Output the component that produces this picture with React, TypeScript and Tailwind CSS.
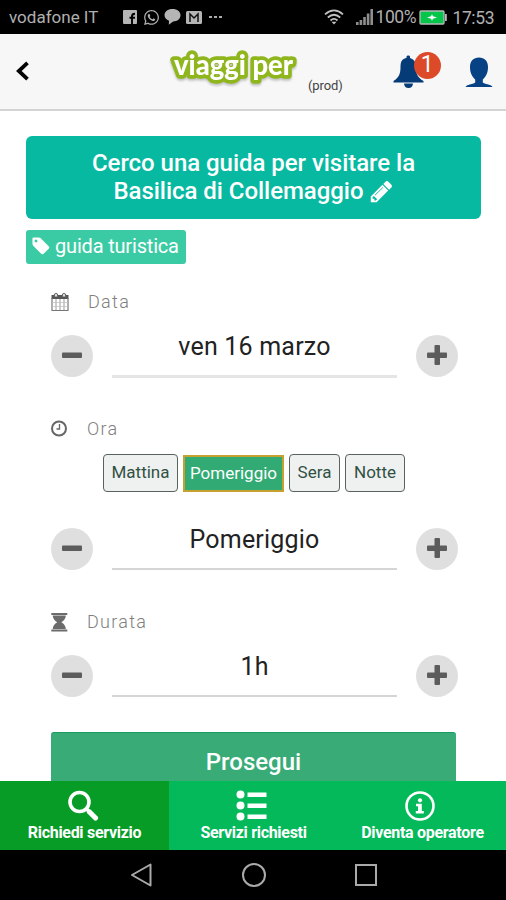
import React from "react";
import { FaWhatsapp } from "react-icons/fa";

const Facebook = () => (
  <svg className="block h-[14px] w-[14px]" viewBox="0 0 14 14">
    <rect width="14" height="14" rx="1" fill="#b5b5b5" />
    <path d="M9 14V6.300Q9 3.800 12 3.800M6.500 7.800H12" stroke="#000" strokeWidth="1.900" fill="none" />
  </svg>
);

const Bubble = () => (
  <svg className="block h-[16px] w-[17px]" viewBox="0 0 17 16">
    <path d="M8.500 0C13.300 0 16.500 2.600 16.500 6.200s-3.200 6.200-7.400 6.200L4.800 15.700l.2-4C2.300 10.600.5 8.800.5 6.200.5 2.600 3.700 0 8.500 0z" fill="#b5b5b5" />
  </svg>
);

const Mail = () => (
  <svg className="block h-[13px] w-[16px]" viewBox="0 0 16 13">
    <rect width="16" height="13" rx="1.500" fill="#b5b5b5" />
    <path d="M4 11V3l4 4 4-4v8" fill="none" stroke="#111" strokeWidth="1.500" />
  </svg>
);

const Wifi = () => (
  <svg className="block h-[16px] w-[20px]" viewBox="0 0 20 16" fill="none" stroke="#c2c2c2" strokeWidth="1.700">
    <path d="M1 5.300Q10-2.500 19 5.300M3.800 8.500Q10 3 16.200 8.500M6.500 11.500Q10 8.300 13.500 11.500" />
    <path d="M7.500 12.700h5L10 15.500z" fill="#c2c2c2" stroke="none" />
  </svg>
);

const Signal = () => (
  <svg className="block h-[16px] w-[18px]" viewBox="0 0 18 16" fill="#8e8e8e">
    <path d="M0 13h2.600v3H0zM3.600 11h2.600v5H3.600zM7.200 8h2.600v8H7.200zM10.800 4.500h2.600V16h-2.600zM14.400 0H17v16h-2.600z" />
  </svg>
);

const Battery = () => (
  <svg className="block h-[15px] w-[28px] shrink-0" viewBox="0 0 28 15">
    <rect x="1" y="1" width="24" height="13" rx="1" fill="#05c64b" stroke="#b9b9b9" strokeWidth="1.300" />
    <path d="M26 4h1.800v7H26z" fill="#b9b9b9" />
    <path d="M8 7.500l4-1.200 1-2 1 2 4 1.200-4 1.200-1 2-1-2z" fill="#fff" />
  </svg>
);

const Bell = () => (
  <svg className="block h-[34px] w-[31px]" viewBox="0 0 31 34" fill="#053b77">
    <path d="M13.500 3V1.800Q13.500.5 15.300.5T17 1.800V3Q23 4.800 23 11.500C23 19 24.500 22.500 30.500 26v1.500H.5V26C6 22.500 7.500 19 7.500 11.500 7.500 6 9.500 3.800 13.500 3z" />
    <path d="M11 28.500h9Q19.500 33 15.500 33T11 28.500z" />
  </svg>
);

const Person = () => (
  <svg className="block h-[31px] w-[28px]" viewBox="0 0 28 31">
    <path d="M14 .5C19.500.5 23 4 23 10c0 6-2.300 10-5.200 12.500v3q1 1.300 5.500 1.900 3.500.6 4.300 2.600H.4q.8-2 4.300-2.600 4.500-.6 5.500-1.900v-3C7.300 20 5 16 5 10 5 4 8.500.5 14 .5z" fill="#064284" />
  </svg>
);

const Pencil = () => (
  <svg className="ml-[5px] inline-block h-[25px] w-[25px] align-[-5px]" viewBox="0 0 1792 1792" fill="currentColor">
    <path d="M491 1536l91-91-235-235-91 91v107h128v128h107zm523-928q0-22-22-22-10 0-17 7l-542 542q-7 7-7 17 0 22 22 22 10 0 17-7l542-542q7-7 7-17zm-54-192l416 416-832 832h-416v-416zm683 96q0 53-37 90l-166 166-416-416 166-165q36-38 90-38 53 0 91 38l235 234q37 39 37 91z" />
  </svg>
);

const Tag = () => (
  <svg className="mt-[-2px] block h-[20px] w-[20px] shrink-0" viewBox="0 0 1792 1792" fill="currentColor">
    <path d="M576 448q0-53-37.500-90.500t-90.500-37.500-90.500 37.500-37.500 90.500 37.500 90.500 90.500 37.500 90.500-37.500 37.500-90.500zm1067 576q0 53-37 90l-491 492q-39 37-91 37-53 0-90-37l-715-716q-38-37-64.500-101t-26.500-117v-416q0-52 38-90t90-38h416q53 0 117 26.500t102 64.500l715 714q37 39 37 91z" />
  </svg>
);

const Calendar = () => (
  <svg className="block h-[20px] w-[18px]" viewBox="0 0 18 20">
    <path d="M.5 3h17v4H.5z" fill="#555" />
    <path d="M1 6v12.500h16V6" fill="none" stroke="#777" strokeWidth="1.200" />
    <path d="M5 7v11M9 7v11M13 7v11" stroke="#999" strokeWidth="1" />
    <path d="M1 10.500h16M1 14.500h16" stroke="#c4c4c4" strokeWidth=".8" />
    <path d="M3.500 4.500V2.500Q5 0 6.500 2.500v2M11.500 4.500V2.500Q13 0 14.500 2.500v2" fill="#eee" stroke="#666" strokeWidth="1.200" />
  </svg>
);

const Clock = () => (
  <svg className="block h-[18px] w-[18px]" viewBox="0 0 18 18" fill="none" stroke="#666">
    <circle cx="8" cy="8.500" r="7" strokeWidth="2" />
    <path d="M8.500 4v5H5.500" strokeWidth="1.300" />
  </svg>
);

const Hourglass = () => (
  <svg className="block h-[19px] w-[18px]" viewBox="0 0 18 19" fill="#6b6b6b">
    <path d="M.3 0h16v2H.3zM.3 16.500h16v2H.3zM1.800 2.500h13c0 3.500-2.500 5.500-4.500 6.700 2 1.200 4.500 3.300 4.500 6.800h-13c0-3.500 2.500-5.600 4.500-6.800-2-1.200-4.500-3.200-4.500-6.700z" />
  </svg>
);

function Field({ icon, label, value, thick, children, className }: {
  icon: React.ReactNode; label: string; value: string; thick?: boolean; children?: React.ReactNode; className: string;
}) {
  return (
    <section className={className}>
      <div className="flex h-[20px] items-center">
        {icon}
        <span className={`${thick ? "ml-[19px]" : "ml-[18px]"} text-[18px] leading-[20px] font-light tracking-[1.3px] text-[#808080]`}>{label}</span>
      </div>
      {children}
      <div className={`${children ? "mt-[36px]" : "mt-[23px]"} flex h-[43px] w-[407px] items-start justify-between`}>
        <Round />
        <div className={`flex w-[285px] justify-center ${thick ? "h-[43px] border-b-[3px] border-[#e5e5e5]" : "h-[42px] border-b-2 border-[#d5d5d5]"}`}>
          <span className={`${thick ? "tracking-[0.2px]" : "tracking-[0.2px]"} text-[25px] leading-[24px] text-[#222]`}>{value}</span>
        </div>
        <Round plus />
      </div>
    </section>
  );
}

function Round({ plus }: { plus?: boolean }) {
  return (
    <button className="flex h-[42px] w-[42px] shrink-0 items-center justify-center rounded-full bg-[#dfdfdf]">
      <svg className="mb-[3px] block h-[20px] w-[20px]" viewBox="0 0 20 20" fill="#5c5c5c">
        <rect y="7.500" width="20" height="5.500" rx="1" />
        {plus && <rect x="7.500" width="5.500" height="20" rx="1" />}
      </svg>
    </button>
  );
}

const slot = "flex h-[38px] items-center justify-center rounded-[4px] border border-[#59635e] bg-[#eff0f0] text-[17px] text-[#315143]";

export default function App() {
  return (
    <main className="flex h-[900px] w-[506px] flex-col overflow-hidden bg-white font-[Roboto,'Liberation_Sans',sans-serif]">
      <div className="flex h-[34px] shrink-0 items-center bg-black pl-[9px] text-[#b0b0b0]">
        <span className="w-[114px] pt-[2px] text-[17px] tracking-[0px] whitespace-nowrap">vodafone IT</span>
        <Facebook />
        <FaWhatsapp className="ml-[6px] h-[17px] w-[17px]" />
        <span className="ml-[4px]"><Bubble /></span>
        <span className="ml-[5px]"><Mail /></span>
        <span className="ml-[7px] flex gap-[2.500px]">
          <i className="h-[2px] w-[2.500px] bg-[#aaa]" /><i className="h-[2px] w-[2.500px] bg-[#aaa]" /><i className="h-[2px] w-[2.500px] bg-[#aaa]" />
        </span>
        <span className="ml-[102px]"><Wifi /></span>
        <span className="ml-[12px]"><Signal /></span>
        <span className="ml-[2px] w-[43px] text-[17.500px] tracking-[-0.4px]">100%</span>
        <Battery />
        <span className="ml-[6px] pt-[2px] text-[17.500px] tracking-[-0.4px]">17:53</span>
      </div>

      <header className="flex h-[77px] shrink-0 items-start border-b-[2px] border-[#d4d4d4] bg-[#f7f7f7]">
        <svg className="mt-[27px] ml-[16px] block h-[20px] w-[14px]" viewBox="0 0 14 20" fill="none" stroke="#050505" strokeWidth="3.800">
          <path d="M11.500 1.800L2.800 10l8.700 8.200" />
        </svg>
        <svg className="mt-[13px] ml-[135px] block h-[44px] w-[140px] drop-shadow-[0_2px_1px_rgba(0,0,0,0.22)]" viewBox="0 0 140 44">
          <text className="font-[Lato,sans-serif] text-[28px] font-black [paint-order:stroke]" x="9" y="28" textLength="119" lengthAdjust="spacingAndGlyphs" fill="#fff" stroke="#8fb61d" strokeWidth="7.500" strokeLinejoin="round">viaggi per</text>
        </svg>
        <span className="mt-[43px] ml-[3px] text-[13px] leading-[18px] text-[#444] tracking-[-0.1px]">(prod)</span>
        <div className="relative mt-[21px] ml-[50px] w-[31px]">
          <Bell />
          <span className="absolute top-[-3px] left-[21px] flex h-[27px] w-[27px] items-center justify-center rounded-full bg-[#dc4a29] text-[23px] text-white">1</span>
        </div>
        <div className="mt-[23px] ml-[41px]"><Person /></div>
      </header>

      <div className="h-[670px] shrink-0 overflow-hidden px-[26px] pt-[25px]">
        <h1 className="h-[83px] w-[455px] rounded-[6px] bg-[#08b9a1] pt-[13px] text-center text-[24px] leading-[28px] font-medium text-white">
          <span className="tracking-[-0.04px]">Cerco una guida per visitare la<br />Basilica di Collemaggio</span><Pencil />
        </h1>
        <div className="mt-[11px] flex h-[34px] w-[160px] items-center rounded-[3px] bg-[#3acba4] pl-[5px] text-white">
          <Tag />
          <span className="ml-[4px] pb-[3px] text-[20px] tracking-[-0.18px] whitespace-nowrap">guida turistica</span>
        </div>
        <div className="pl-[25px]">
          <Field className="mt-[28px]" icon={<Calendar />} label="Data" value="ven 16 marzo" thick />
          <Field className="mt-[41px]" icon={<Clock />} label="Ora" value="Pomeriggio">
            <div className="mt-[15px] flex h-[38px] items-end pl-[52px]">
              <button className={`${slot} w-[75px]`}>Mattina</button>
              <button className="ml-[5px] flex h-[37px] w-[101px] items-center justify-center border-2 border-[#c7a12f] bg-[#31ab73] text-[17px] text-white">Pomeriggio</button>
              <button className={`${slot} ml-[5px] w-[51px]`}>Sera</button>
              <button className={`${slot} ml-[5px] w-[60px]`}>Notte</button>
            </div>
          </Field>
          <Field className="mt-[41px]" icon={<Hourglass />} label="Durata" value="1h" />
          <button className="mt-[34px] flex h-[60px] w-[405px] justify-center rounded-[3px] border-t border-[#189b60] bg-[#39ab77] pt-[14px] text-[24px] leading-[30px] font-medium tracking-[0px] text-white">Prosegui</button>
        </div>
      </div>

      <nav className="grid h-[69px] shrink-0 grid-cols-[169px_169px_168px] bg-[#04b95a] text-[16px] font-bold text-white">
        <div className="flex flex-col items-center bg-[#069c25] pt-[9px]">
          <svg className="ml-[-3px] h-[32px] w-[32px]" viewBox="0 0 32 32" fill="none" stroke="white">
            <circle cx="12.500" cy="12" r="9.500" strokeWidth="3.600" />
            <path d="M19.500 19l3 3" strokeWidth="3.500" /><path d="M22.500 22l6 6" strokeWidth="5.200" strokeLinecap="round" />
          </svg>
          <span className="mt-[1px] leading-[20px] tracking-[-0.3px]">Richiedi servizio</span>
        </div>
        <div className="flex flex-col items-center pt-[9px]">
          <svg className="ml-[-4px] h-[32px] w-[32px]" viewBox="0 0 32 32" fill="white">
            <circle cx="4.500" cy="4.500" r="4" /><circle cx="4.500" cy="15.500" r="4" /><circle cx="4.500" cy="26.500" r="4" />
            <path d="M11.500 2.500h19v4.500h-19zM11.500 13.500h19V18h-19zM11.500 24.500h19V29h-19z" />
          </svg>
          <span className="mt-[1px] leading-[20px] tracking-[-0.3px]">Servizi richiesti</span>
        </div>
        <div className="flex flex-col items-center pt-[9px]">
          <svg className="ml-[-4px] h-[32px] w-[32px]" viewBox="0 0 32 32">
            <circle cx="16" cy="16" r="13.500" fill="none" stroke="white" strokeWidth="2.600" />
            <circle cx="16" cy="10.300" r="2.100" fill="white" /><path d="M12 13.800h5.800V21h2v2.500h-8V21h2.200v-4.700h-2z" fill="white" />
          </svg>
          <span className="mt-[1px] ml-[1px] leading-[20px] tracking-[-0.3px]">Diventa operatore</span>
        </div>
      </nav>

      <footer className="flex h-[50px] shrink-0 items-center bg-black pl-[130px]">
        <svg className="h-[25px] w-[23px]" viewBox="0 0 23 25" fill="none" stroke="#aaa" strokeWidth="2" strokeLinejoin="round"><path d="M20.500 1.500v21L2 12z" /></svg>
        <span className="ml-[89px] h-[24px] w-[24px] rounded-full border-2 border-[#aaa]" />
        <span className="ml-[89px] h-[22px] w-[22px] border-2 border-[#aaa]" />
      </footer>
    </main>
  );
}
